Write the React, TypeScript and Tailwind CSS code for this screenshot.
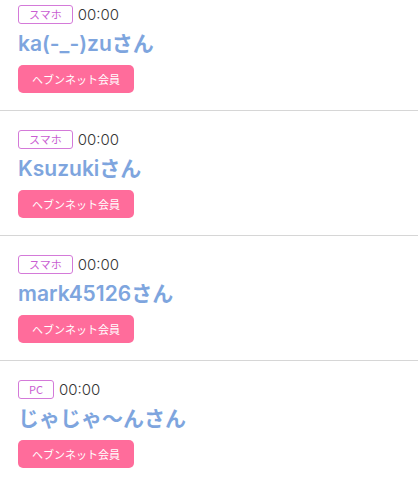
import React from 'react';

const users = [
  { device: 'スマホ', time: '00:00', name: 'ka(-_-)zuさん' },
  { device: 'スマホ', time: '00:00', name: 'Ksuzukiさん' },
  { device: 'スマホ', time: '00:00', name: 'mark45126さん' },
  { device: 'PC', time: '00:00', name: 'じゃじゃ〜んさん' },
];

export default function App() {
  return (
    <div className="w-[418px] h-[480px] overflow-hidden bg-white font-['Inter','Noto_Sans_CJK_JP',sans-serif]">
      {/* scrolled list, first row partly above the fold */}
      <div className="-mt-[14px]">
        {users.map((u, i) => (
          <div key={i} className="border-b border-[#d6d6d6] px-[18px] pt-[19px] pb-[17px]">
            <div className="flex items-center gap-[5px] h-[18px]">
              <span className="h-[19px] px-[10px] border border-[#d47ad9] rounded-[3px] text-[11px] leading-[16px] text-[#c95ed2] flex items-center font-['Noto_Sans_CJK_JP',sans-serif]">
                {u.device}
              </span>
              <span className="text-[15px] text-[#333] leading-none font-light">{u.time}</span>
            </div>
            <div className="text-[21px] font-semibold text-[#7ea5de] leading-[28px] mt-[7px] mb-[7px]">{u.name}</div>
            <div className="w-[116px] h-[28px] rounded-[5px] bg-[#ff6c9b] text-white text-[11px] flex items-center justify-center font-['Noto_Sans_CJK_JP',sans-serif]">
              ヘブンネット会員
            </div>
          </div>
        ))}
      </div>
    </div>
  );
}
